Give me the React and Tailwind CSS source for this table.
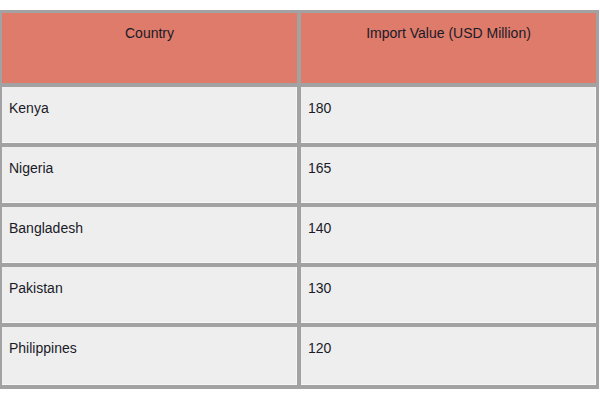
import React from "react";

const rows = [
  { country: "Kenya", value: "180" },
  { country: "Nigeria", value: "165" },
  { country: "Bangladesh", value: "140" },
  { country: "Pakistan", value: "130" },
  { country: "Philippines", value: "120" },
];

const App = () => {
  return (
    <div className="w-[600px] h-[400px] bg-white pt-[10px] font-['Liberation_Sans',Arial,sans-serif] text-[14px] text-[#1a1a28]">
      <div className="w-[599px] bg-[#a2a2a2] pt-[3px] pb-[4px] pl-[2px] pr-[3px] grid grid-cols-2 gap-x-[4px] gap-y-[4px]">
        <div className="h-[70px] bg-[#de7b6a] text-center pt-[10px]">Country</div>
        <div className="h-[70px] bg-[#de7b6a] text-center pt-[10px]">Import Value (USD Million)</div>
        {rows.map((row, i) => {
          const last = i === rows.length - 1;
          const cell = `${last ? "h-[58px]" : "h-[56px]"} bg-[#eeeeee] border-b border-r border-[#f7f7f7] pt-[11px] px-[7px]`;
          return (
            <React.Fragment key={row.country}>
              <div className={cell}>{row.country}</div>
              <div className={cell}>{row.value}</div>
            </React.Fragment>
          );
        })}
      </div>
    </div>
  );
};

export default App;
